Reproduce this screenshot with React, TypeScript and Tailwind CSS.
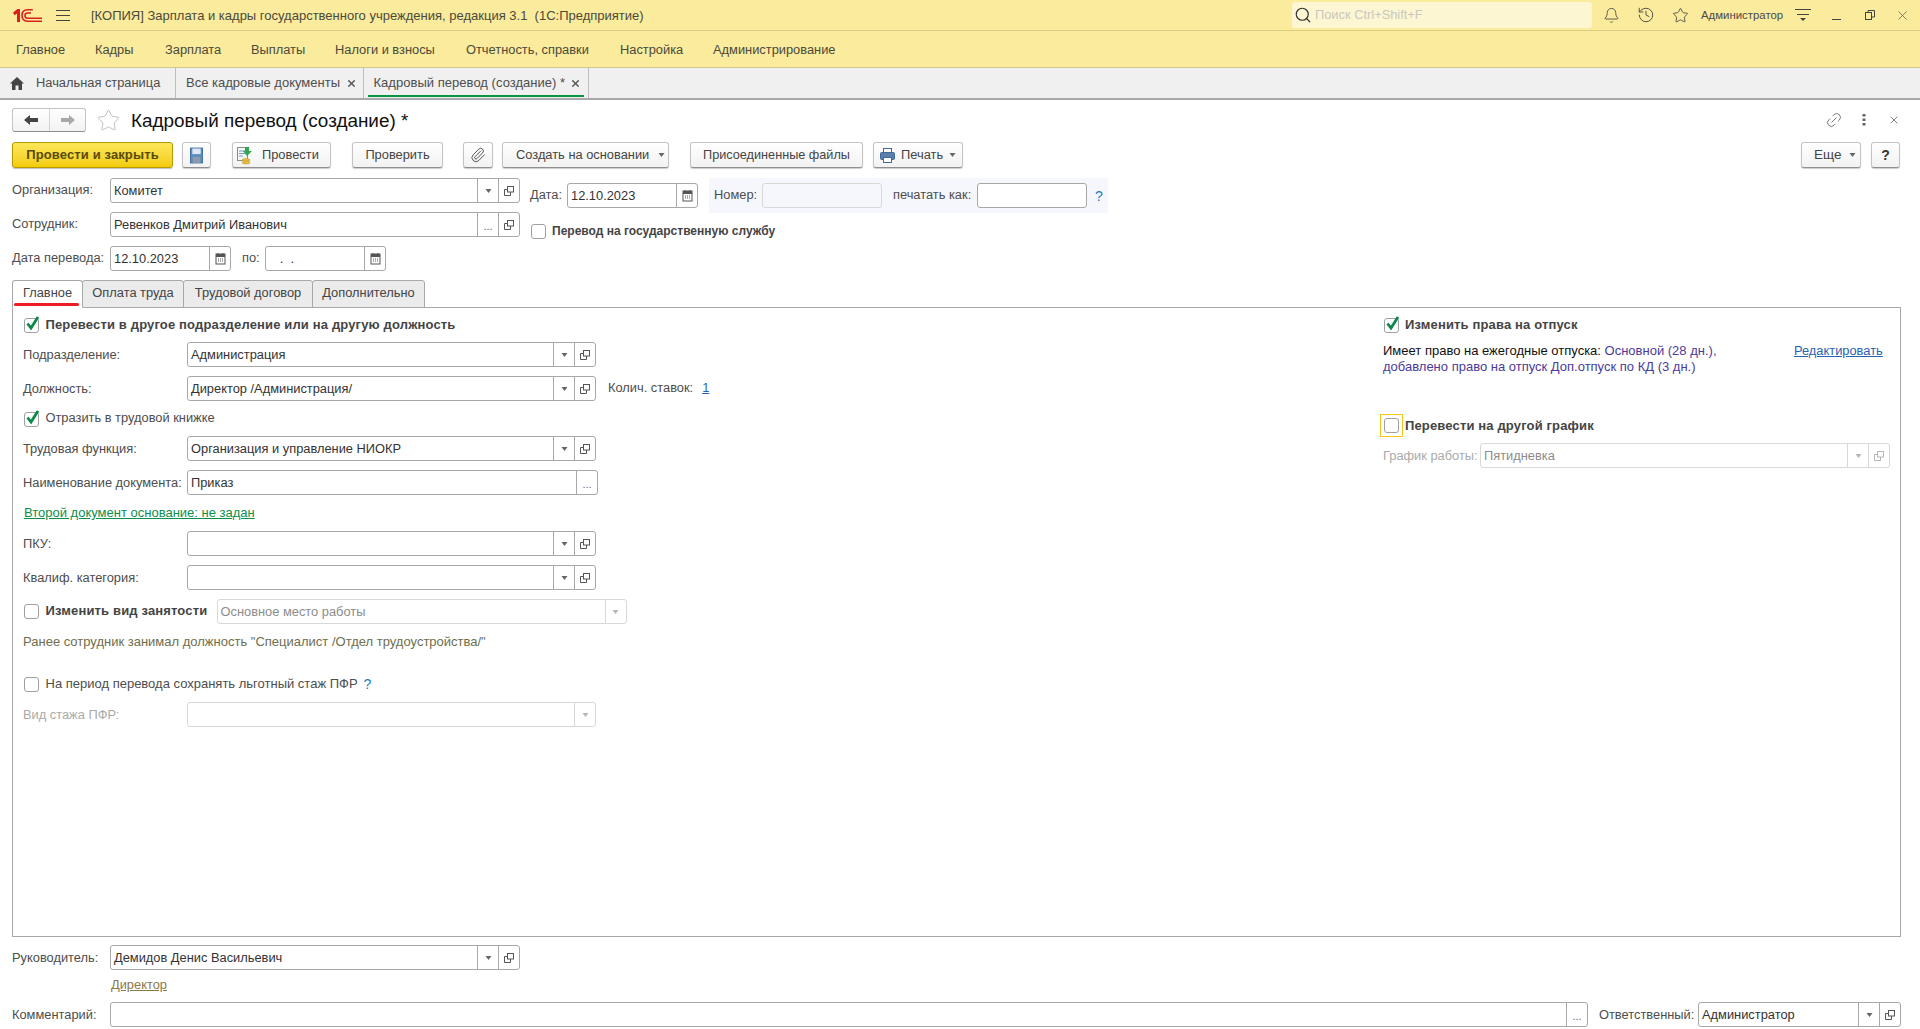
import React from "react";
import { Bell, History, Star, X, Link2, Paperclip, Search } from "lucide-react";

type Seg = "drop" | "open" | "more" | "cal";

function SegIcon({ t, off }: { t: Seg; off?: boolean }) {
  const c = off ? "#b5b5b5" : "#555555";
  if (t === "drop")
    return (
      <svg width="7" height="4" viewBox="0 0 7 4"><path d="M0.5 0H6.5L3.5 4Z" fill={off ? "#b5b5b5" : "#666666"} /></svg>
    );
  if (t === "open")
    return (
      <svg width="10" height="10" viewBox="0 0 10 10" fill="none" stroke={c} strokeWidth="1">
        <rect x="3.5" y="0.5" width="6" height="5.5" />
        <path d="M3.5 3.5H0.5V9.5H6.5V6" />
      </svg>
    );
  if (t === "more") return <span className={off ? "text-[#aaaaaa] text-[11px]" : "text-[#666666] text-[11px] leading-[14px] pt-[3px]"}>...</span>;
  return (
    <svg width="11" height="12" viewBox="0 0 11 12">
      <rect x="1" y="1" width="9" height="10" fill="#ffffff" stroke="#555555" />
      <rect x="1" y="1" width="9" height="3" fill="#555555" />
      <path d="M3 0V2M8 0V2" stroke="#555555" />
      <path d="M3 6H4M5 6H6M7 6H8M3 8H4M5 8H6M7 8H8" stroke="#555555" />
    </svg>
  );
}

function Field({
  w,
  text = "",
  segs = [],
  off,
  h = "h-[25px]",
}: {
  w: string;
  text?: string;
  segs?: Seg[];
  off?: boolean;
  h?: string;
}) {
  return (
    <div
      className={`${w} ${h} flex shrink-0 rounded-[3px] border bg-white ${
        off ? "border-[#d8d8d8]" : "border-[#a8a8a8]"
      }`}
    >
      <div className={`min-w-0 flex-1 flex items-center pl-[3px] whitespace-pre overflow-hidden ${off ? "text-[#8c8c8c]" : "text-[#333333]"}`}>
        {text}
      </div>
      {segs.map((s, i) => (
        <div
          key={i}
          className={`w-[21px] shrink-0 flex items-center justify-center border-l ${off ? "border-[#d8d8d8]" : "border-[#a8a8a8]"}`}
        >
          <SegIcon t={s} off={off} />
        </div>
      ))}
    </div>
  );
}

function Check({ on, focus }: { on?: boolean; focus?: boolean }) {
  const box = (
    <div className="w-[15px] h-[15px] shrink-0 rounded-[3px] border border-[#a0a0a0] bg-white flex items-center justify-center">
      {on && (
        <svg width="17" height="17" viewBox="0 0 17 17" className="overflow-visible shrink-0 -mt-[3px] ml-[2px]">
          <path d="M3.5 8.5L7 13L14 2" fill="none" stroke="#0d8a4a" strokeWidth="2.8" />
        </svg>
      )}
    </div>
  );
  if (focus)
    return (
      <div className="w-[23px] h-[23px] shrink-0 border border-[#f5c518] flex items-center justify-center">{box}</div>
    );
  return box;
}

function Btn({
  w,
  children,
  ml,
  align = "justify-center gap-[6px]",
}: {
  w: string;
  children: React.ReactNode;
  ml: string;
  align?: string;
}) {
  return (
    <div
      className={`${w} ${ml} ${align} h-[26px] shrink-0 flex items-center rounded-[3px] border border-[#c4c4c4] border-b-[#8f8f8f] bg-gradient-to-b from-white to-[#f2f2f2] shadow-[0_1px_1px_rgba(0,0,0,0.2)] text-[#444444] whitespace-nowrap`}
    >
      {children}
    </div>
  );
}

const Tri = () => (
  <svg width="7" height="4" viewBox="0 0 7 4" className="shrink-0"><path d="M0.5 0H6.5L3.5 4Z" fill="#666666" /></svg>
);

function TopTab({ w, children, active }: { w: string; children: React.ReactNode; active?: boolean }) {
  return (
    <div className={`${w} h-full shrink-0 flex items-center border-r border-[#bdbdbd] relative`}>
      {children}
      {active && <div className="absolute left-[4px] right-[4px] bottom-[1px] h-[2px] bg-[#0b9444]" />}
    </div>
  );
}

function FormTab({ w, children, active }: { w: string; children: React.ReactNode; active?: boolean }) {
  return (
    <div
      className={`${w} h-[28px] -mb-[1px] shrink-0 relative flex items-center justify-center rounded-t-[3px] border border-[#a8a8a8] -mr-[1px] ${
        active ? "bg-white border-b-white z-10" : "bg-[#ebebeb]"
      } text-[#444444] pb-[3px]`}
    >
      {children}
      {active && <div className="absolute left-[1px] right-[3px] bottom-[1px] h-[3px] rounded-[2px] bg-[#ed1c24]" />}
    </div>
  );
}

const boldText = "font-bold text-[13px] tracking-[0.15px] text-[#444444] whitespace-nowrap";

export default function App() {
  return (
    <div
      className="w-[1920px] h-[1029px] overflow-hidden bg-white text-[12.85px] leading-[16px] text-[#4d4d4d] flex flex-col"
      style={{ fontFamily: '"Liberation Sans", Arial, sans-serif' }}
    >
      {/* title bar */}
      <div className="h-[31px] shrink-0 bg-[#fbeb9d] border-b border-[#d9cc85] flex items-center">
        <svg width="29" height="13" viewBox="0 0 29 13" className="ml-[13px] mt-[1px] shrink-0" fill="none" stroke="#d9201f">
          <path d="M0 3.5L4.5 0H7V13H4V4.5L1.5 6.2Z" fill="#d9201f" stroke="none" />
          <path d="M19 1.5V0.8H14.5C10.5 0.8 9 3.5 9 6.5C9 9.5 10.5 12.2 14.5 12.2H29" strokeWidth="1.6" />
          <path d="M18 4H14.5C12.8 4 12 5 12 6.5C12 8 12.8 9.2 14.5 9.2H29" strokeWidth="1.6" />
        </svg>
        <svg width="14" height="12" viewBox="0 0 14 12" className="ml-[14px] shrink-0" stroke="#444444" strokeWidth="1">
          <path d="M0 1.5H14M0 6.5H14M0 11.5H14" />
        </svg>
        <div className="ml-[21px] pt-[1px] w-[1200px] shrink-0 text-[13px] text-[#4a4a3a] whitespace-nowrap">
          [КОПИЯ] Зарплата и кадры государственного учреждения, редакция 3.1&nbsp; (1С:Предприятие)
        </div>
        <div className="flex-1" />
        <div className="w-[300px] h-[26px] shrink-0 rounded-[3px] bg-[#fdf6d2] flex items-center pl-[2px] text-[#c8c8c0]">
          <Search size={18} strokeWidth={1.6} color="#333333" className="shrink-0" />
          <span className="ml-[3px]">Поиск Ctrl+Shift+F</span>
        </div>
        <div className="w-[328px] shrink-0 flex items-center text-[#4a4a4a]">
          <Bell size={17} strokeWidth={1.2} color="#444444" className="ml-[11px] shrink-0" />
          <History size={18} strokeWidth={1.2} color="#444444" className="ml-[17px] shrink-0" />
          <Star size={17} strokeWidth={1.2} color="#444444" className="ml-[17px] shrink-0" />
          <span className="ml-[12px] text-[11.4px] whitespace-nowrap">Администратор</span>
          <svg width="16" height="16" viewBox="0 0 16 16" className="ml-[12px] shrink-0" stroke="#444444">
            <path d="M0 2.5H16M2 7.5H14" />
            <path d="M5 11H11L8 14Z" fill="#444444" stroke="none" />
          </svg>
          <svg width="11" height="12" viewBox="0 0 11 12" className="ml-[20px] shrink-0" stroke="#444444"><path d="M1 10.5H10" /></svg>
          <svg width="10" height="10" viewBox="0 0 10 10" className="ml-[23px] shrink-0" fill="none" stroke="#444444">
            <rect x="0.5" y="2.5" width="6" height="7" />
            <path d="M3 2.5V0.5H9.5V7H7" />
          </svg>
          <X size={15} strokeWidth={1} color="#444444" className="ml-[20px] shrink-0" />
        </div>
      </div>
      {/* menu */}
      <div className="h-[37px] shrink-0 bg-[#fbeb9d] border-b border-[#d0c98e] flex items-center text-[#4a4a3a] pl-[16px] pt-[1px] whitespace-nowrap">
        <span className="w-[79px]">Главное</span>
        <span className="w-[70px]">Кадры</span>
        <span className="w-[86px]">Зарплата</span>
        <span className="w-[84px]">Выплаты</span>
        <span className="w-[131px]">Налоги и взносы</span>
        <span className="w-[154px]">Отчетность, справки</span>
        <span className="w-[93px]">Настройка</span>
        <span>Администрирование</span>
      </div>
      {/* open tabs */}
      <div className="h-[32px] shrink-0 bg-[#f0f0f0] border-b-2 border-[#a8a8a8] flex items-center text-[#4d4d4d] whitespace-nowrap">
        <TopTab w="w-[176px]">
          <svg width="14" height="13" viewBox="0 0 14 13" className="ml-[10px] shrink-0" fill="#444444">
            <path d="M7 0L14 6.5H12V13H8.5V8.5H5.5V13H2V6.5H0Z" />
          </svg>
          <span className="ml-[12px]">Начальная страница</span>
        </TopTab>
        <TopTab w="w-[187.5px]">
          <span className="ml-[10px] text-[13px]">Все кадровые документы</span>
          <X size={11} strokeWidth={3} color="#555555" className="ml-[6px] shrink-0" />
        </TopTab>
        <TopTab w="w-[225px]" active>
          <span className="ml-[10px] text-[13px] tracking-[0.03px]">Кадровый перевод (создание) *</span>
          <X size={11} strokeWidth={3} color="#555555" className="ml-[5px] shrink-0" />
        </TopTab>
      </div>

      {/* title row */}
      <div className="mt-[8px] h-[24px] shrink-0 flex items-center pl-[12px] pr-[20px]">
        <div className="w-[74px] h-[24px] flex rounded-[3px] border border-[#c4c4c4] border-b-[#8f8f8f] bg-gradient-to-b from-white to-[#f2f2f2]">
          <div className="w-[37px] flex items-center justify-center border-r border-[#d4d4d4]">
            <svg width="14" height="10" viewBox="0 0 14 10" fill="#444444"><path d="M0 5L6 0V3H14V7H6V10Z" /></svg>
          </div>
          <div className="flex-1 flex items-center justify-center">
            <svg width="14" height="10" viewBox="0 0 14 10" fill="#a8a8a8"><path d="M14 5L8 0V3H0V7H8V10Z" /></svg>
          </div>
        </div>
        <Star size={25} strokeWidth={0.9} color="#bdbdbd" className="ml-[10px] shrink-0" />
        <div className="ml-[10px] pt-[2px] text-[18.9px] leading-[24px] text-[#111111] whitespace-nowrap">Кадровый перевод (создание) *</div>
        <div className="flex-1" />
        <Link2 size={18} strokeWidth={1.1} color="#666666" className="-rotate-45 shrink-0" />
        <svg width="4" height="14" viewBox="0 0 4 14" className="ml-[19px] shrink-0" fill="#666666">
          <rect x="0.5" y="1" width="3" height="2.5" />
          <rect x="0.5" y="5.5" width="3" height="2.5" />
          <rect x="0.5" y="10" width="3" height="2.5" />
        </svg>
        <X size={12} strokeWidth={1.4} color="#444444" className="ml-[22px] shrink-0" />
      </div>

      {/* toolbar */}
      <div className="mt-[10px] h-[26px] shrink-0 flex items-start pl-[12px] pr-[20px]">
        <div className="w-[161px] h-[26px] shrink-0 flex items-center justify-center rounded-[3px] border border-[#b59a00] bg-gradient-to-b from-[#fbe757] to-[#f4cc00] shadow-[0_1px_1px_rgba(0,0,0,0.25)] font-bold text-[13px] tracking-[0.12px] text-[#5a4a00] whitespace-nowrap">
          Провести и закрыть
        </div>
        <Btn w="w-[29px]" ml="ml-[9px]">
          <svg width="13" height="17" viewBox="0 0 14 17">
            <rect x="0.5" y="0.5" width="13" height="16" fill="#5b8cc4" stroke="#3f6a9e" />
            <rect x="2.5" y="1" width="9" height="6" fill="#dce8f5" />
            <rect x="3" y="10" width="8" height="6.5" fill="#8e9aa8" />
          </svg>
        </Btn>
        <Btn w="w-[99px]" ml="ml-[21px]" align="justify-start pl-[4px] gap-[9px]">
          <svg width="16" height="19" viewBox="0 0 16 19" className="shrink-0">
            <rect x="0.5" y="1.5" width="10" height="13" fill="#f6f6f6" stroke="#8a8a8a" />
            <path d="M2 5H8M2 7.5H8M2 10H6" stroke="#7a9cc0" />
            <path d="M8 1H12V5H15L10 10L6 5H8Z" fill="#2fa84f" />
            <ellipse cx="9" cy="14" rx="4" ry="1.5" fill="#e8c04a" stroke="#b08a20" strokeWidth="0.5" />
            <ellipse cx="9" cy="16.5" rx="4" ry="1.5" fill="#e8c04a" stroke="#b08a20" strokeWidth="0.5" />
          </svg>
          <span>Провести</span>
        </Btn>
        <Btn w="w-[91px]" ml="ml-[21px]">Проверить</Btn>
        <Btn w="w-[30px]" ml="ml-[20px]">
          <Paperclip size={16} strokeWidth={1.5} color="#555555" />
        </Btn>
        <Btn w="w-[167px]" ml="ml-[9px]" align="justify-start pl-[13px] gap-[9px]">
          <span>Создать на основании</span>
          <Tri />
        </Btn>
        <Btn w="w-[173px]" ml="ml-[21px]">
          <span className="text-[12.7px]">Присоединенные файлы</span>
        </Btn>
        <Btn w="w-[90px]" ml="ml-[10px]" align="justify-start pl-[6px] gap-[6px]">
          <svg width="15" height="15" viewBox="0 0 15 15" className="shrink-0">
            <rect x="3.5" y="0.5" width="8" height="5" fill="#ffffff" stroke="#3f6a9e" />
            <rect x="0.5" y="4.5" width="14" height="7" rx="1" fill="#5b7fa8" stroke="#3f6a9e" />
            <rect x="3.5" y="9.5" width="8" height="5" fill="#ffffff" stroke="#3f6a9e" />
          </svg>
          <span>Печать</span>
          <Tri />
        </Btn>
        <div className="flex-1" />
        <Btn w="w-[60px]" ml="ml-0" align="justify-start pl-[12px] gap-[8px]">
          <span className="text-[13.5px]">Еще</span>
          <Tri />
        </Btn>
        <Btn w="w-[29px]" ml="ml-[10px]">
          <span className="font-bold text-[#333333] text-[14px]">?</span>
        </Btn>
      </div>

      {/* header fields */}
      <div className="mt-[10px] h-[93px] shrink-0 pl-[12px] flex">
        <div className="w-[508px] shrink-0">
          <div className="flex items-center">
            <div className="w-[98px] shrink-0 pb-[1px]">Организация:</div>
            <Field w="w-[410px]" text="Комитет" segs={["drop", "open"]} />
          </div>
          <div className="flex items-center mt-[9px]">
            <div className="w-[98px] shrink-0 pb-[1px]">Сотрудник:</div>
            <Field w="w-[410px]" text="Ревенков Дмитрий Иванович" segs={["more", "open"]} />
          </div>
          <div className="flex items-center mt-[9px]">
            <div className="w-[98px] shrink-0 pb-[1px] whitespace-nowrap">Дата перевода:</div>
            <Field w="w-[121px]" text="12.10.2023" segs={["cal"]} />
            <div className="w-[34px] shrink-0 pl-[11px] pb-[1px]">по:</div>
            <Field w="w-[121px]" text="   .  ." segs={["cal"]} />
          </div>
        </div>
        <div className="ml-[10px] shrink-0">
          <div className="flex items-center h-[35px]">
            <div className="w-[37px] shrink-0 pb-[1px]">Дата:</div>
            <Field w="w-[131px]" text="12.10.2023" segs={["cal"]} />
            <div className="ml-[11px] w-[399px] h-[35px] shrink-0 bg-[#f5f7fd] flex items-center pl-[5px] whitespace-nowrap">
              <div className="w-[48px] shrink-0 pb-[1px]">Номер:</div>
              <div className="w-[120px] h-[25px] shrink-0 rounded-[3px] border border-[#d8d8d8] bg-[#f5f7fd]" />
              <div className="ml-[11px] w-[84px] shrink-0 pb-[1px]">печатать как:</div>
              <div className="w-[110px] h-[25px] shrink-0 rounded-[3px] border border-[#a8a8a8] bg-white" />
              <div className="ml-[8px] text-[#1b7dc4] text-[14px]">?</div>
            </div>
          </div>
          <div className="flex items-center mt-[10px] ml-[1px]">
            <Check />
            <span className="ml-[6px] pb-[1px] font-bold text-[12px] text-[#444444] whitespace-nowrap">Перевод на государственную службу</span>
          </div>
        </div>
      </div>

      {/* form tabs */}
      <div className="mt-[9px] h-[27px] shrink-0 pl-[12px] flex items-end">
        <FormTab w="w-[71px]" active>Главное</FormTab>
        <FormTab w="w-[102px]">Оплата труда</FormTab>
        <FormTab w="w-[130px]">Трудовой договор</FormTab>
        <FormTab w="w-[113px]">Дополнительно</FormTab>
      </div>

      {/* panel */}
      <div className="ml-[12px] w-[1889px] h-[630px] shrink-0 border border-[#a8a8a8] flex">
        <div className="w-[620px] shrink-0 pl-[10px]">
          <div className="h-[20px] mt-[7px] flex items-center pl-[0.5px]">
            <Check on />
            <span className={`ml-[7px] pb-[1px] ${boldText}`}>Перевести в другое подразделение или на другую должность</span>
          </div>
          <div className="mt-[7px] flex items-center">
            <div className="w-[164px] shrink-0 whitespace-nowrap">Подразделение:</div>
            <Field w="w-[409px]" text="Администрация" segs={["drop", "open"]} />
          </div>
          <div className="mt-[9px] flex items-center">
            <div className="w-[164px] shrink-0 whitespace-nowrap">Должность:</div>
            <Field w="w-[409px]" text="Директор /Администрация/" segs={["drop", "open"]} />
            <span className="ml-[12px] pb-[1px] whitespace-nowrap">Колич. ставок:</span>
            <span className="ml-[9px] pb-[1px] text-[#2a62b0] underline">1</span>
          </div>
          <div className="h-[20px] mt-[8px] flex items-center pl-[0.5px]">
            <Check on />
            <span className="ml-[7px] pb-[2px] whitespace-nowrap">Отразить в трудовой книжке</span>
          </div>
          <div className="mt-[7px] flex items-center">
            <div className="w-[164px] shrink-0 whitespace-nowrap">Трудовая функция:</div>
            <Field w="w-[409px]" text="Организация и управление НИОКР" segs={["drop", "open"]} />
          </div>
          <div className="mt-[9px] flex items-center">
            <div className="w-[164px] shrink-0 whitespace-nowrap">Наименование документа:</div>
            <Field w="w-[411px]" text="Приказ" segs={["more"]} />
          </div>
          <div className="h-[20px] mt-[9px] pb-[2px] flex items-center pl-[1px] text-[13px] text-[#0b8f4a] underline whitespace-nowrap">
            Второй документ основание: не задан
          </div>
          <div className="mt-[7px] flex items-center">
            <div className="w-[164px] shrink-0">ПКУ:</div>
            <Field w="w-[409px]" segs={["drop", "open"]} />
          </div>
          <div className="mt-[9px] flex items-center">
            <div className="w-[164px] shrink-0 whitespace-nowrap">Квалиф. категория:</div>
            <Field w="w-[409px]" segs={["drop", "open"]} />
          </div>
          <div className="mt-[9px] flex items-center pl-[0.5px]">
            <Check />
            <span className={`ml-[7px] w-[171px] shrink-0 pb-[1px] ${boldText}`}>Изменить вид занятости</span>
            <Field w="w-[410px]" text="Основное место работы" segs={["drop"]} off />
          </div>
          <div className="h-[20px] mt-[9px] pb-[3px] flex items-center text-[13px] text-[#6e6e4e] whitespace-nowrap">
            Ранее сотрудник занимал должность "Специалист /Отдел трудоустройства/"
          </div>
          <div className="h-[20px] mt-[21px] flex items-center pl-[0.5px]">
            <Check />
            <span className="ml-[7px] pb-[1px] text-[13px] whitespace-nowrap">На период перевода сохранять льготный стаж ПФР</span>
            <span className="ml-[6px] pb-[1px] text-[#1b7dc4] text-[14px]">?</span>
          </div>
          <div className="mt-[8px] flex items-center">
            <div className="w-[164px] shrink-0 text-[#aaaaaa] whitespace-nowrap">Вид стажа ПФР:</div>
            <Field w="w-[409px]" segs={["drop"]} off />
          </div>
        </div>

        <div className="ml-auto w-[520px] shrink-0">
          <div className="h-[20px] mt-[7px] flex items-center pl-[4px]">
            <Check on />
            <span className={`ml-[6px] pb-[1px] ${boldText}`}>Изменить права на отпуск</span>
          </div>
          <div className="mt-[8px] flex pl-[3px]">
            <div className="w-[411px] shrink-0 text-[13px] text-[#4b3a9c] leading-[16px]">
              <span className="text-[#111111]">Имеет право на ежегодные отпуска:</span> Основной (28 дн.),
              <br />
              добавлено право на отпуск Доп.отпуск по КД (3 дн.)
            </div>
            <span className="text-[#2a62b0] underline whitespace-nowrap">Редактировать</span>
          </div>
          <div className="mt-[39px] h-[23px] flex items-center">
            <Check focus />
            <span className={`ml-[2px] ${boldText}`}>Перевести на другой график</span>
          </div>
          <div className="mt-[6px] flex items-center pl-[3px]">
            <div className="w-[97px] shrink-0 text-[#aaaaaa] whitespace-nowrap">График работы:</div>
            <Field w="w-[410px]" text="Пятидневка" segs={["drop", "open"]} off />
          </div>
        </div>
      </div>

      {/* footer */}
      <div className="mt-[8px] pl-[12px] flex items-center shrink-0">
        <div className="w-[98px] shrink-0">Руководитель:</div>
        <Field w="w-[410px]" text="Демидов Денис Васильевич" segs={["drop", "open"]} />
      </div>
      <div className="h-[20px] mt-[6px] pb-[2px] pl-[111px] flex items-center shrink-0 text-[#8a7a4a] underline">Директор</div>
      <div className="mt-[6px] pl-[12px] flex items-center shrink-0">
        <div className="w-[98px] shrink-0">Комментарий:</div>
        <Field w="w-[1478px]" segs={["more"]} />
        <div className="ml-[11px] w-[99px] shrink-0 whitespace-nowrap">Ответственный:</div>
        <Field w="w-[203px]" text="Администратор" segs={["drop", "open"]} />
      </div>
    </div>
  );
}
